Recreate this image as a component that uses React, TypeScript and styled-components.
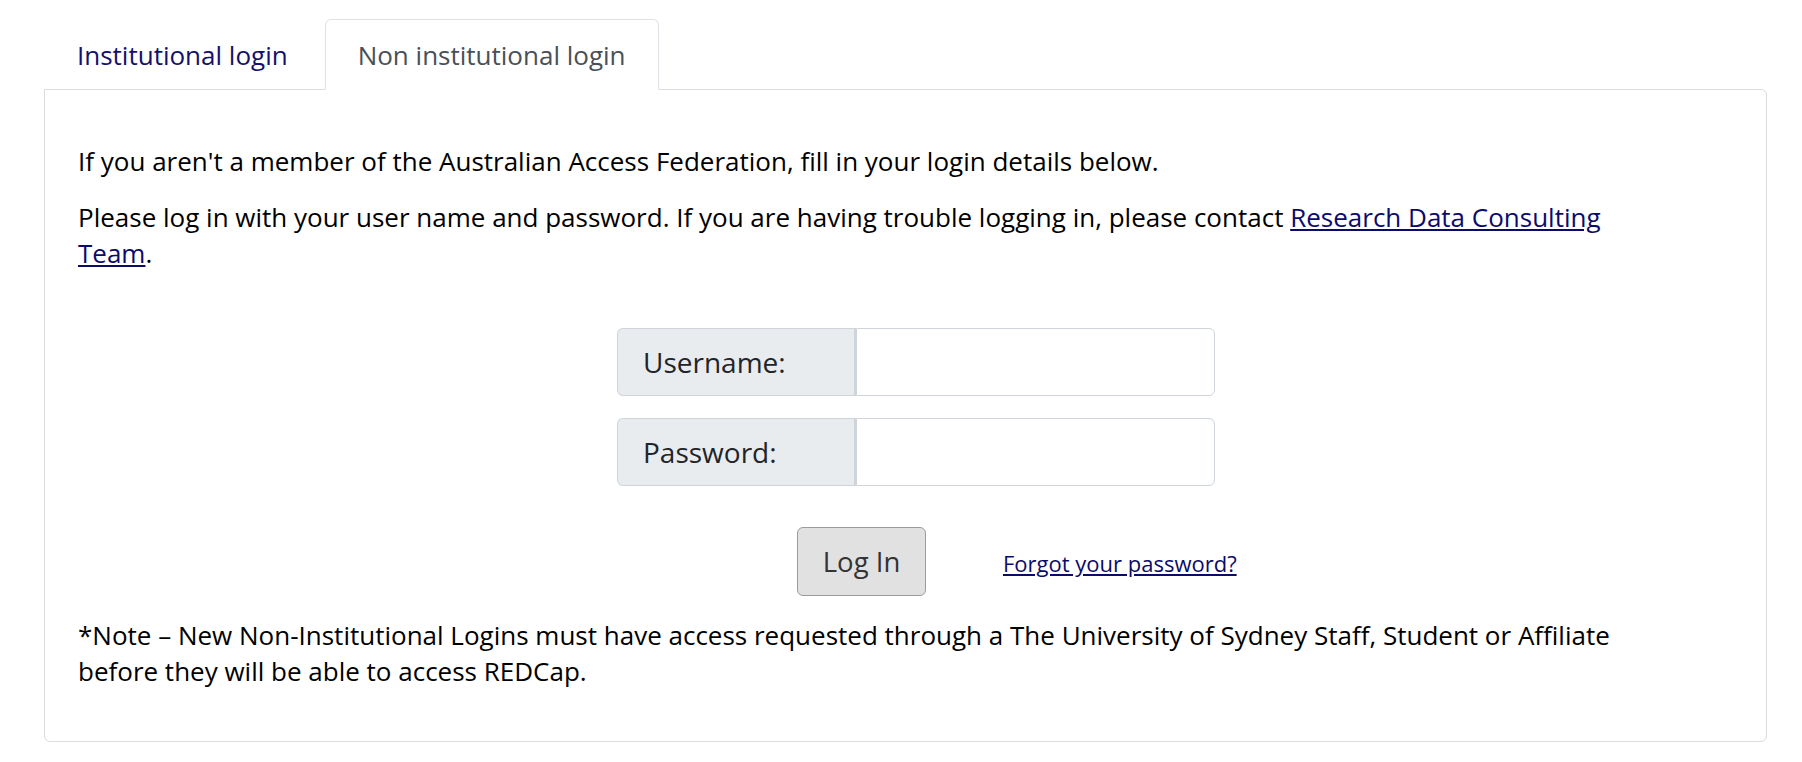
import React from "react";
import styled, { createGlobalStyle, css } from "styled-components";

const GlobalStyle = createGlobalStyle`
  html, body {
    margin: 0;
    padding: 0;
    background: #ffffff;
    font-family: "Open Sans", "Noto Sans", Arial, sans-serif;
    color: #000000;
  }
  * { box-sizing: border-box; }
`;

const Page = styled.div`
  padding: 19px 35px 0 44px;
`;

const TabList = styled.div`
  display: flex;
  gap: 4px;
  position: relative;
  z-index: 1;
  margin-bottom: -1px;
`;

const Tab = styled.div<{ $active?: boolean }>`
  height: 71px;
  display: flex;
  align-items: center;
  padding: 0 32px;
  font-size: 26px;
  line-height: 1;
  border: 1px solid transparent;
  border-radius: 6px 6px 0 0;
  color: #14106b;
  cursor: pointer;
  ${(p) =>
    p.$active &&
    css`
      color: #495057;
      background: #ffffff;
      border-color: #dee2e6 #dee2e6 #ffffff;
    `}
`;

const Panel = styled.div`
  border: 1px solid #dcdcdc;
  border-radius: 0 6px 6px 6px;
  padding: 53px 33px 52px 33px;
`;

const Text = styled.p<{ $gap?: number }>`
  margin: 0 0 ${(p) => p.$gap ?? 0}px;
  font-size: 26px;
  line-height: 36px;
  max-width: 1560px;
  color: #000000;
`;

const Link = styled.a<{ $small?: boolean }>`
  color: #0b0b6b;
  text-decoration: underline;
  cursor: pointer;
  ${(p) =>
    p.$small &&
    css`
      font-size: 22px;
      white-space: nowrap;
    `}
`;

const Form = styled.form`
  margin: 57px 0 0 539px;
  display: flex;
  flex-direction: column;
  gap: 22px;
  width: 598px;
`;

const InputGroup = styled.div`
  display: flex;
  height: 68px;
`;

const Addon = styled.label`
  width: 239px;
  display: flex;
  align-items: center;
  padding-left: 25px;
  background: #e9ecef;
  border: 1px solid #ced4da;
  border-right-width: 2px;
  border-radius: 6px 0 0 6px;
  font-size: 28px;
  color: #212529;
`;

const Input = styled.input`
  flex: 1;
  min-width: 0;
  border: 1px solid #ced4da;
  border-radius: 0 6px 6px 0;
  background: #ffffff;
  font-size: 25px;
  padding: 0 16px;
  outline: none;
`;

const ButtonRow = styled.div`
  display: flex;
  align-items: baseline;
  margin: 19px 0 0 180px;
`;

const Button = styled.button`
  flex: none;
  width: 129px;
  height: 69px;
  font-family: inherit;
  font-size: 27.5px;
  color: #333333;
  background: #e1e1e1;
  border: 1px solid #9b9b9b;
  border-radius: 6px;
  cursor: pointer;
`;

const Forgot = styled(Link)`
  flex: none;
  margin-left: 77px;
`;

const NoteWrap = styled.div`
  margin-top: 21px;
`;

export default function App() {
  return (
    <>
      <GlobalStyle />
      <Page>
        <TabList>
          <Tab>Institutional login</Tab>
          <Tab $active>Non institutional login</Tab>
        </TabList>
        <Panel>
          <Text $gap={20}>
            If you aren't a member of the Australian Access Federation, fill in your login details below.
          </Text>
          <Text>
            Please log in with your user name and password. If you are having trouble logging in, please contact{" "}
            <Link>Research Data Consulting Team</Link>.
          </Text>
          <Form onSubmit={(e) => e.preventDefault()}>
            <InputGroup>
              <Addon htmlFor="username">Username:</Addon>
              <Input id="username" type="text" />
            </InputGroup>
            <InputGroup>
              <Addon htmlFor="password">Password:</Addon>
              <Input id="password" type="password" />
            </InputGroup>
            <ButtonRow>
              <Button type="submit">Log In</Button>
              <Forgot $small>Forgot your password?</Forgot>
            </ButtonRow>
          </Form>
          <NoteWrap>
            <Text>
              *Note – New Non-Institutional Logins must have access requested through a The University of Sydney Staff,
              Student or Affiliate before they will be able to access REDCap.
            </Text>
          </NoteWrap>
        </Panel>
      </Page>
    </>
  );
}
